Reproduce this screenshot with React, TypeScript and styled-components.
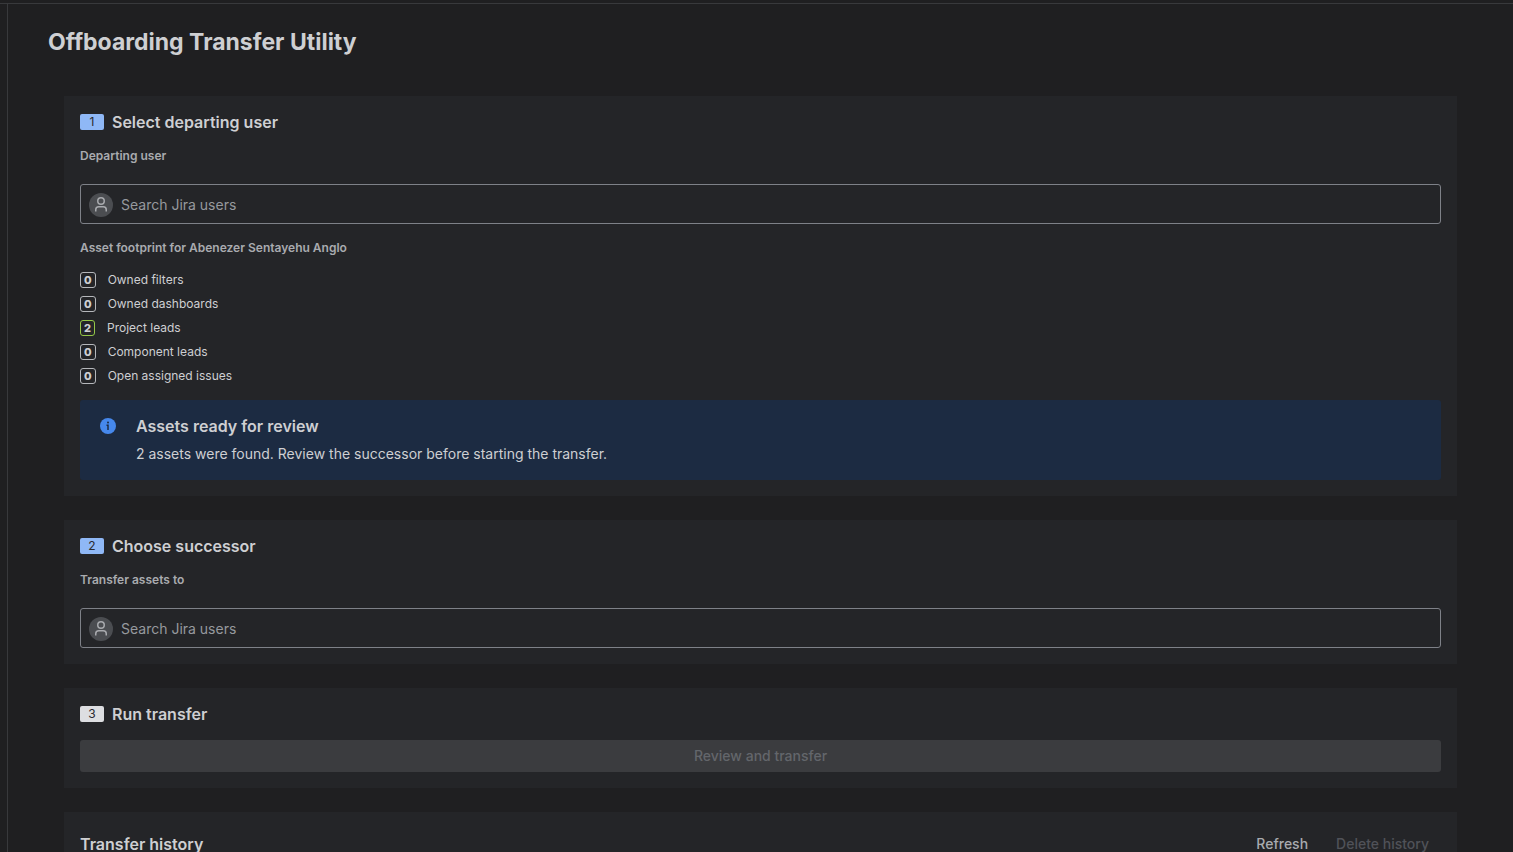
import React, { useId } from "react";
import styled, { createGlobalStyle } from "styled-components";

const GlobalStyle = createGlobalStyle`
  *, *::before, *::after { box-sizing: border-box; }
  body {
    margin: 0;
    background: #1f1f21;
    color: #cecfd2;
    font-family: Inter, "Liberation Sans", sans-serif;
    font-size: 14px;
    line-height: 20px;
    -webkit-font-smoothing: antialiased;
  }
  h1, h2, h3, p, ul { margin: 0; padding: 0; }
  button, input { font: inherit; }
`;

const Shell = styled.div`
  display: flex;
  height: 100vh;
  padding: 3px 0 0 7px;
  background: linear-gradient(#38393c, #38393c) 0 3px / 100% 1px no-repeat #1f1f21;
`;

const Page = styled.main`
  flex: 1;
  min-width: 0;
  margin-top: 1px;
  padding: 24px 40px;
  border-left: 1px solid #38393c;
  overflow-y: auto;
  scrollbar-width: none;
`;

const Title = styled.h1`
  font-size: 23px;
  line-height: 28px;
  font-weight: 650;
`;

const Sections = styled.div`
  display: flex;
  flex-direction: column;
  gap: 24px;
  padding: 40px 16px;
`;

const Card = styled.section`
  display: flex;
  flex-direction: column;
  gap: 16px;
  padding: 16px;
  background: #242528;
`;

const Heading = styled.div`
  display: flex;
  align-items: center;
  gap: 8px;
`;

const HeadingText = styled.h2`
  font-size: 16px;
  line-height: 20px;
  font-weight: 600;
`;

const Step = styled.span<{ $idle?: boolean }>`
  width: 24px;
  height: 16px;
  border-radius: 2px;
  background: ${(p) => (p.$idle ? "#dddee1" : "#8fb8f6")};
  color: ${(p) => (p.$idle ? "#292a2e" : "#292a2e")};
  font-size: 12px;
  line-height: 16px;
  text-align: center;
`;

const FieldGroup = styled.div`
  display: flex;
  flex-direction: column;
  gap: 20px;
`;

const Label = styled.label`
  color: #a9abaf;
  font-size: 12px;
  line-height: 16px;
  font-weight: 600;
`;

const Subheading = styled.h3`
  color: #a9abaf;
  font-size: 12px;
  line-height: 16px;
  font-weight: 600;
`;

const SearchBox = styled.div`
  display: flex;
  align-items: center;
  gap: 8px;
  height: 40px;
  padding: 2px 8px 0;
  border: 1px solid #7e8188;
  border-radius: 3px;
`;

const Avatar = styled.svg`
  flex: none;
  width: 24px;
  height: 24px;
`;

const SearchInput = styled.input`
  flex: 1;
  min-width: 0;
  height: 20px;
  padding: 0;
  border: 0;
  outline: 0;
  background: transparent;
  color: #cecfd2;
  &::placeholder { color: #96999e; opacity: 1; }
`;

const AssetList = styled.ul`
  display: flex;
  flex-direction: column;
  gap: 8px;
  list-style: none;
`;

const AssetRow = styled.li`
  display: flex;
  align-items: center;
  gap: 12px;
  font-size: 12px;
  line-height: 16px;
`;

const Count = styled.span<{ $found: boolean }>`
  height: 16px;
  padding: 0 3px;
  border: 1px solid ${(p) => (p.$found ? "#94c748" : "#b5b7bb")};
  border-radius: 3px;
  font-size: 11px;
  line-height: 14px;
  font-weight: 800;
`;

const Banner = styled.div`
  display: flex;
  gap: 16px;
  padding: 16px;
  border-radius: 3px;
  background: #1c2b42;
`;

const InfoIcon = styled.svg`
  flex: none;
  width: 24px;
  height: 20px;
`;

const BannerBody = styled.div`
  display: flex;
  flex-direction: column;
  gap: 8px;
`;

const PrimaryButton = styled.button`
  height: 32px;
  padding: 0 12px;
  border: 0;
  border-radius: 3px;
  background: #3b3c3f;
  color: #63666b;
  font-weight: 500;
`;

const HistoryHeader = styled.div`
  display: flex;
  align-items: center;
  justify-content: space-between;
`;

const Actions = styled.div`
  display: flex;
  gap: 4px;
`;

const SubtleButton = styled.button`
  height: 32px;
  padding: 0 12px;
  border: 0;
  border-radius: 3px;
  background: transparent;
  color: #a9abaf;
  font-weight: 500;
  &:disabled { color: #505258; }
`;

const assets = [
  { name: "Owned filters", count: 0 },
  { name: "Owned dashboards", count: 0 },
  { name: "Project leads", count: 2 },
  { name: "Component leads", count: 0 },
  { name: "Open assigned issues", count: 0 },
];

function StepHeading({ step, title, idle }: { step: number; title: string; idle?: boolean }) {
  return (
    <Heading>
      <Step $idle={idle}>{step}</Step>
      <HeadingText>{title}</HeadingText>
    </Heading>
  );
}

function UserPicker({ label }: { label: string }) {
  const id = useId();
  return (
    <FieldGroup>
      <Label htmlFor={id}>{label}</Label>
      <SearchBox>
        <Avatar viewBox="0 0 24 24" fill="none" aria-hidden="true">
          <circle cx="12" cy="12" r="12" fill="#4b4d51" />
          <g stroke="#a9abaf" strokeWidth="1.5">
            <circle cx="12" cy="8" r="3.25" />
            <path d="M6.75 18.5v-1.75a3 3 0 0 1 3-3h4.5a3 3 0 0 1 3 3v1.75" />
          </g>
        </Avatar>
        <SearchInput id={id} type="text" placeholder="Search Jira users" />
      </SearchBox>
    </FieldGroup>
  );
}

export default function App() {
  return (
    <>
      <GlobalStyle />
      <Shell>
        <Page>
          <Title>Offboarding Transfer Utility</Title>
          <Sections>
            <Card>
              <StepHeading step={1} title="Select departing user" />
              <UserPicker label="Departing user" />
              <Subheading>Asset footprint for Abenezer Sentayehu Anglo</Subheading>
              <AssetList>
                {assets.map((asset) => (
                  <AssetRow key={asset.name}>
                    <Count $found={asset.count > 0}>{asset.count}</Count>
                    <span>{asset.name}</span>
                  </AssetRow>
                ))}
              </AssetList>
              <Banner>
                <InfoIcon viewBox="0 0 24 20" aria-hidden="true">
                  <circle cx="12" cy="10" r="8" fill="#4688ec" />
                  <circle cx="12" cy="6.5" r="1" fill="#1c2b42" />
                  <path d="M10.5 9.25H12V14" fill="none" stroke="#1c2b42" strokeWidth="1.5" />
                </InfoIcon>
                <BannerBody>
                  <HeadingText>Assets ready for review</HeadingText>
                  <p>2 assets were found. Review the successor before starting the transfer.</p>
                </BannerBody>
              </Banner>
            </Card>
            <Card>
              <StepHeading step={2} title="Choose successor" />
              <UserPicker label="Transfer assets to" />
            </Card>
            <Card>
              <StepHeading step={3} title="Run transfer" idle />
              <PrimaryButton type="button" disabled>Review and transfer</PrimaryButton>
            </Card>
            <Card>
              <HistoryHeader>
                <HeadingText>Transfer history</HeadingText>
                <Actions>
                  <SubtleButton type="button">Refresh</SubtleButton>
                  <SubtleButton type="button" disabled>Delete history</SubtleButton>
                </Actions>
              </HistoryHeader>
            </Card>
          </Sections>
        </Page>
      </Shell>
    </>
  );
}
